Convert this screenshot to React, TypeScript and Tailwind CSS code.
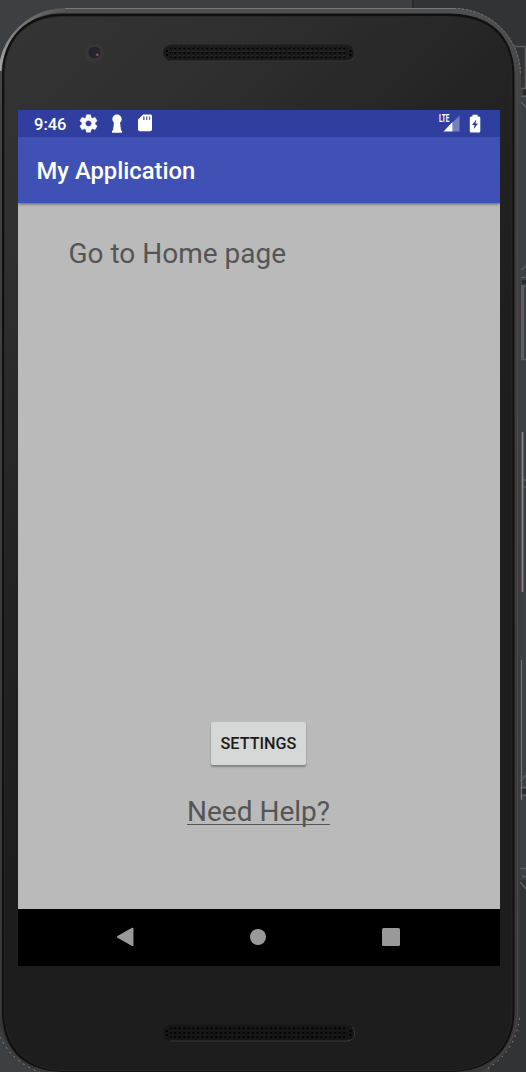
import React from "react";

function SpeakerGrille({ id, lower = false }: { id: string; lower?: boolean }) {
  return (
    <svg className="block" width="194" height="18" viewBox="0 0 194 18">
      <defs>
        <pattern id={id} width="4.57" height="4.5" patternUnits="userSpaceOnUse" x="6.6" y="2.5">
          <rect x="1" y="0.6" width="2" height="2.2" fill="#020202" />
          <rect x="1" y="0" width="1.2" height="0.9" fill={lower ? "#151515" : "#454545"} />
        </pattern>
      </defs>
      <rect x="1.5" y="1" width="191" height="15.5" rx="7.7" fill={lower ? "#161616" : "#1b1b1b"} stroke={lower ? "#181818" : "#202020"} />
      <path d="M8 17H185Q192.600 16.500 192.600 9Q192.600 5 190 2.800" fill="none" stroke={lower ? "#404040" : "#383838"} strokeWidth="0.8" />
      <rect x="8" y="2.5" width="178" height="13.5" fill={`url(#${id})`} />
      <path d="M4 6h2v2H4zM4 10h2v2H4zM187.500 6h2v2h-2zM187.500 10h2v2h-2z" fill="#020202" />
    </svg>
  );
}

function Backdrop() {
  return (
    <svg className="absolute inset-0" width="526" height="1072" viewBox="0 0 526 1072">
      <rect width="526" height="1072" fill="#3c4043" />
      <rect x="412" width="2" height="100" fill="#2b2b2b" />
      <rect x="414" width="112" height="90" fill="#313335" />
      <rect x="490" y="880" width="36" height="192" fill="#313335" />
      <g fill="none" stroke="#5a5c5d" strokeWidth="1.6">
        <path d="M510 46.500H525.500V88.500H520M520 96.500H526M521 102L526 107" />
        <path d="M521 270L526 266M521 277.500H526M521 286.500H526M521 359.500H526M522 480H526M522 487H526" />
        <path d="M520 781L526 775M520 787.500H526M520 795.500H526M519 868.500H526M522 876.500H526M519 881L526 889" />
      </g>
      <path d="M522 280H526V284H522ZM523 90H526V95H523ZM522 789H526V794H522Z" fill="#2b2b2b" />
    </svg>
  );
}

function Frame() {
  return (
    <svg className="absolute inset-0" width="526" height="1072" viewBox="0 0 526 1072">
      <defs>
        <linearGradient id="metal" x1="0" y1="0" x2="0" y2="1">
          <stop offset="0" stopColor="#505050" />
          <stop offset=".1" stopColor="#424142" />
          <stop offset="1" stopColor="#383637" />
        </linearGradient>
        <linearGradient id="glass" gradientUnits="userSpaceOnUse" x1="0" y1="0" x2="450" y2="450">
          <stop offset="0" stopColor="#353535" />
          <stop offset=".3" stopColor="#2f2f2f" />
          <stop offset=".65" stopColor="#232323" />
          <stop offset="1" stopColor="#1d1d1e" />
        </linearGradient>
        <linearGradient id="shine" gradientUnits="userSpaceOnUse" x1="0" y1="70" x2="65" y2="8">
          <stop offset="0" stopColor="#a5a5a5" />
          <stop offset=".5" stopColor="#777" />
          <stop offset="1" stopColor="#555" />
        </linearGradient>
      </defs>
      <path d="M65 8H454A67 67 0 0 1 521 75V430L520 1010A66 66 0 0 1 454 1077H65A67 67 0 0 1 -2 1010V75A67 67 0 0 1 65 8Z" fill="url(#metal)" />
      <path d="M65 8.500H454" fill="none" stroke="#777" strokeWidth="1" />
      <path d="M0 71A65 65 0 0 1 65 10" fill="none" stroke="url(#shine)" strokeWidth="3" />
      <path d="M63 13.500H448C493 13.500 514.500 38 514.500 77V1011C514.500 1050 489 1072 449 1072H66C24 1072 2 1050 2 1011V75C2 37 27 13.500 63 13.500Z" fill="#101010" />
      <path d="M63 16.500H448C491 16.500 512 39 512 77V1011C512 1049 487 1070.500 449 1070.500H66C28 1070.500 4.500 1049 4.500 1011V75C4.500 39 28 16.500 63 16.500Z" fill="url(#glass)" stroke="#292929" strokeWidth=".8" />
      <path d="M517.500 72V1010Q517 1045 490 1065" fill="none" stroke="#494748" strokeWidth="1.200" />
      <path d="M454 8.500A66.500 66.500 0 0 1 520.500 75" fill="none" stroke="#777" strokeWidth="1" strokeDasharray="2 2" />
      <path d="M522.500 285V360" stroke="#5e5d5e" strokeWidth="3" />
      <path d="M522.500 432V592" stroke="#8b898a" strokeWidth="1.600" />
      <path d="M521.500 660V800" stroke="#737173" strokeWidth="1.200" />
      <path d="M519.500 1018A66 66 0 0 1 485 1070M0 1037A67 67 0 0 0 40 1072" fill="none" stroke="#999" strokeWidth="1" strokeDasharray="1.500 4.500" />
      <circle cx="94" cy="53" r="10" fill="#363636" />
      <circle cx="94.500" cy="52.500" r="5.800" fill="#242226" />
      <circle cx="95.500" cy="53" r="4" fill="#2a2532" />
      <circle cx="97.300" cy="54.800" r="1.300" fill="#805860" />
    </svg>
  );
}

function StatusBar() {
  return (
    <div className="flex h-[27px] shrink-0 items-center bg-[#303f9f] pl-4 pr-[19px] text-white">
      <span className="w-[44px] pt-[3px] text-[16.500px] font-medium leading-none">9:46</span>
      <svg width="21" height="21" viewBox="0 0 24 24" fill="currentColor" className="shrink-0">
        <path stroke="currentColor" strokeWidth=".5" fillRule="evenodd" d="M19.430 12.980c.04-.32.07-.64.07-.98s-.03-.66-.07-.98l2.110-1.650c.19-.15.24-.42.12-.64l-2-3.460c-.12-.22-.39-.3-.61-.22l-2.490 1c-.52-.4-1.080-.73-1.690-.98l-.38-2.650A.488.488 0 0 0 14 2h-4c-.25 0-.46.18-.49.42l-.38 2.650c-.61.25-1.170.59-1.690.98l-2.490-1c-.23-.09-.49 0-.61.22l-2 3.460c-.13.22-.07.49.12.64l2.110 1.650c-.04.32-.07.65-.07.98s.03.66.07.98l-2.110 1.650c-.19.15-.24.42-.12.64l2 3.460c.12.22.39.3.61.22l2.490-1c.52.4 1.080.73 1.690.98l.38 2.650c.03.24.24.42.49.42h4c.25 0 .46-.18.49-.42l.38-2.650c.61-.25 1.170-.59 1.690-.98l2.490 1c.23.09.49 0 .61-.22l2-3.460c.12-.22.07-.49-.12-.64l-2.110-1.650zM12 15.500A3.500 3.500 0 1 1 12 8.500a3.500 3.500 0 0 1 0 7z" />
      </svg>
      <svg width="12" height="20" viewBox="0 0 12 20" fill="currentColor" className="ml-3 shrink-0">
        <path d="M3 8.800A4.700 4.700 0 1 1 9 8.800L10 16L11 17V18.800H1V17L2 16Z" />
      </svg>
      <svg width="14" height="18" viewBox="0 0 14 18" fill="currentColor" className="-mt-[1px] ml-[15px] shrink-0">
        <path d="M5.200 .5H12.500Q14 .5 14 2V15.500Q14 17.300 12 17.300H2Q0 17.300 0 15.500V5.500Z" />
        <path d="M5 2.500H6.600V6H5ZM8 2.500H9.400V6H8ZM10.900 2.500H12.200V6H10.900Z" fill="#6671b8" />
      </svg>
      <div className="ml-auto flex items-center gap-[9px]">
        <div className="relative h-[21px] w-[22px]">
          <span className="absolute left-[1px] top-[1px] origin-left scale-x-[0.62] text-[10.500px] font-bold leading-none">LTE</span>
          <svg className="absolute inset-0" width="22" height="21" viewBox="0 0 22 21">
            <path d="M14.500 9.500L21.500 2.500V18.500H14.500Z" fill="#7480c0" />
            <path d="M5.500 18.500L14.500 9V18.500Z" fill="white" />
          </svg>
        </div>
        <svg width="12" height="20" viewBox="0 0 12 20">
          <path d="M3.500 2V.8H8.500V2.500H10Q11.300 2.500 11.300 4V17Q11.300 18.500 10 18.500H2Q.8 18.500 .8 17V4Q.8 2.500 2 2.500H3.500Z" fill="white" />
          <path d="M7.300 5.500L3 11H5.500L4.700 15L9 9.500H6.500Z" fill="#303f9f" />
        </svg>
      </div>
    </div>
  );
}

export default function App() {
  return (
    <main className="relative h-[1072px] w-[526px] overflow-hidden font-['Roboto',sans-serif]">
      <Backdrop />
      <Frame />
      <div className="relative flex h-full flex-col pl-[18px] pr-[26px]">
        <div className="flex h-[110px] shrink-0 pl-[144px] pt-[44px]">
          <SpeakerGrille id="earpiece" />
        </div>
        <section className="flex h-[856px] w-[482px] shrink-0 flex-col bg-[#bababa]">
          <StatusBar />
          <header className="relative flex h-[66px] shrink-0 items-center bg-[#3f51b5] px-[18.500px] shadow-[0_1px_3px_rgba(0,0,0,0.5)] [clip-path:inset(0_0_-6px_0)]">
            <h1 className="pt-[4px] text-[23.800px] font-medium leading-none text-white">My Application</h1>
          </header>
          <div className="flex min-h-0 flex-1 flex-col">
            <p className="ml-[50.500px] mt-[35px] text-[28px] leading-8 text-[#555]">Go to Home page</p>
            <div className="mb-[81px] mt-auto flex flex-col items-center">
              <button className="mr-[1px] h-[43px] w-[95px] rounded-[2px] bg-[#d6d7d7] pt-[2px] text-[16.200px] font-medium text-[#1c1c1c] shadow-[0_2px_2px_rgba(0,0,0,0.3)]">SETTINGS</button>
              <a className="mr-[1px] mt-[31px] text-[28px] leading-8 text-[#555] underline decoration-1 underline-offset-[3px] [text-decoration-skip-ink:none]">Need Help?</a>
            </div>
          </div>
          <nav className="flex h-[57px] shrink-0 items-center bg-black pb-[1px] pl-[98px]">
            <svg width="18" height="20" viewBox="0 0 18 20" className="mr-[116px]"><path d="M17 1.500V18.500L2 10Z" fill="#999" stroke="#999" strokeWidth="2" strokeLinejoin="round" transform="translate(0 .2) scale(.97)" /></svg>
            <span className="mr-[116px] h-4 w-4 rounded-full bg-[#999]" />
            <span className="h-[18px] w-[18px] rounded-[1.500px] bg-[#999]" />
          </nav>
        </section>
        <div className="flex pl-[144px] pt-[58px]">
          <SpeakerGrille id="loudspeaker" lower />
        </div>
      </div>
    </main>
  );
}
